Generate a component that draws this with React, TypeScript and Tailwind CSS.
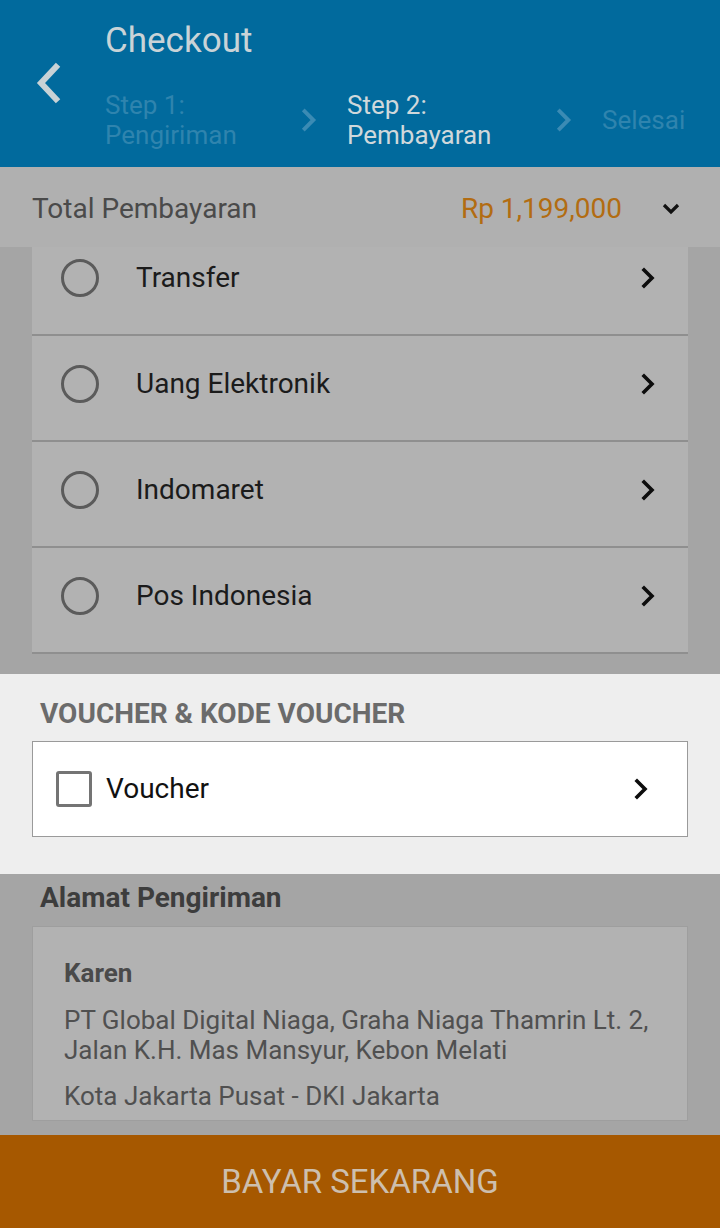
import React from "react";

const font = { fontFamily: "Roboto, 'Noto Sans', sans-serif" };

const ChevronRight = ({ className = "" }: { className?: string }) => (
  <svg viewBox="0 0 16 24" className={className} fill="none" stroke="currentColor" strokeWidth={3.6} strokeLinecap="square">
    <path d="M4 4 L12 12 L4 20" />
  </svg>
);

const methods = ["Transfer", "Uang Elektronik", "Indomaret", "Pos Indonesia"];

const App = () => {
  return (
    <div className="w-[720px] h-[1228px] overflow-hidden flex flex-col bg-[#a5a5a5]" style={font}>
      {/* header */}
      <div className="h-[167px] shrink-0 bg-[#016a9d] flex">
        <div className="w-[105px] flex items-center justify-start pl-[34px] pb-[2px]">
          <svg viewBox="0 0 28 44" className="w-[28px] h-[44px]" fill="none" stroke="#c8d2d6" strokeWidth={6} strokeLinecap="square">
            <path d="M22 6 L7 22 L22 38" />
          </svg>
        </div>
        <div className="flex flex-col pt-[20px]">
          <div className="text-[35px] leading-[42px] text-[#c9d3d7]">Checkout</div>
          <div className="flex items-center mt-[28px]">
            <div className="w-[195px] text-[26px] leading-[30px] text-[#2f84ae]">
              Step 1:
              <br />
              Pengiriman
            </div>
            <ChevronRight className="w-[18px] h-[26px] text-[#3b8bb4] mr-[29px]" />
            <div className="w-[208px] text-[26px] leading-[30px] text-[#d0d8db]">
              Step 2:
              <br />
              Pembayaran
            </div>
            <ChevronRight className="w-[18px] h-[26px] text-[#3b8bb4] mr-[29px]" />
            <div className="text-[26px] leading-[30px] text-[#2f84ae]">Selesai</div>
          </div>
        </div>
      </div>

      {/* total */}
      <div className="h-[80px] shrink-0 bg-[#b0b0b0] flex items-center pl-[32px] pr-[40px] pt-[3px]">
        <div className="flex-1 text-[28px] text-[#4a4a4a]">Total Pembayaran</div>
        <div className="text-[28px] text-[#b26c12]">Rp 1,199,000</div>
        <svg viewBox="0 0 18 12" className="w-[18px] h-[12px] ml-[40px]" fill="none" stroke="#111" strokeWidth={3.2}>
          <path d="M2 2 L9 9 L16 2" />
        </svg>
      </div>

      {/* payment methods */}
      <div className="h-[407px] shrink-0 overflow-hidden px-[32px]">
        <div className="bg-[#b2b2b2] mt-[-17px]">
          {methods.map((m) => (
            <div key={m} className="h-[106px] flex items-center pb-[8px] border-b-2 border-[#8f8f8f]">
              <div className="w-[38px] h-[38px] rounded-full border-[3px] border-[#5b5b5b] ml-[29px]" />
              <div className="flex-1 ml-[37px] text-[28px] text-[#1b1b1b]">{m}</div>
              <ChevronRight className="w-[16px] h-[24px] text-[#0d0d0d] mr-[32px]" />
            </div>
          ))}
        </div>
      </div>

      <div className="h-[20px] shrink-0" />

      {/* voucher */}
      <div className="h-[200px] shrink-0 bg-[#eeeeee] pt-[23px] px-[32px]">
        <div className="pl-[8px] text-[28px] leading-[33px] font-bold text-[#6b6b6b]">VOUCHER &amp; KODE VOUCHER</div>
        <div className="mt-[11px] h-[96px] bg-white border border-[#9a9a9a] flex items-center">
          <div className="w-[36px] h-[36px] rounded-[3px] border-[3px] border-[#747474] ml-[23px]" />
          <div className="flex-1 ml-[14px] text-[28px] text-[#111]">Voucher</div>
          <ChevronRight className="w-[16px] h-[24px] text-[#0d0d0d] mr-[38px]" />
        </div>
      </div>

      {/* address */}
      <div className="flex-1 px-[32px] pt-[7px]">
        <div className="pl-[8px] text-[28px] leading-[33px] font-bold text-[#3d3d3d]">Alamat Pengiriman</div>
        <div className="mt-[12px] h-[195px] bg-[#b2b2b2] border border-[#9e9e9e] px-[31px] pt-[31px]">
          <div className="text-[26px] leading-[30px] font-bold text-[#4a4a4a]">Karen</div>
          <div className="mt-[17px] text-[26px] leading-[30px] text-[#505050]">
            PT Global Digital Niaga, Graha Niaga Thamrin Lt. 2, Jalan K.H. Mas Mansyur, Kebon Melati
          </div>
          <div className="mt-[16px] text-[26px] leading-[30px] text-[#505050]">Kota Jakarta Pusat - DKI Jakarta</div>
        </div>
      </div>

      {/* pay button */}
      <div className="h-[93px] shrink-0 bg-[#a65800] flex items-center justify-center">
        <span className="text-[33px] text-[#cdbfae]">BAYAR SEKARANG</span>
      </div>
    </div>
  );
};

export default App;
